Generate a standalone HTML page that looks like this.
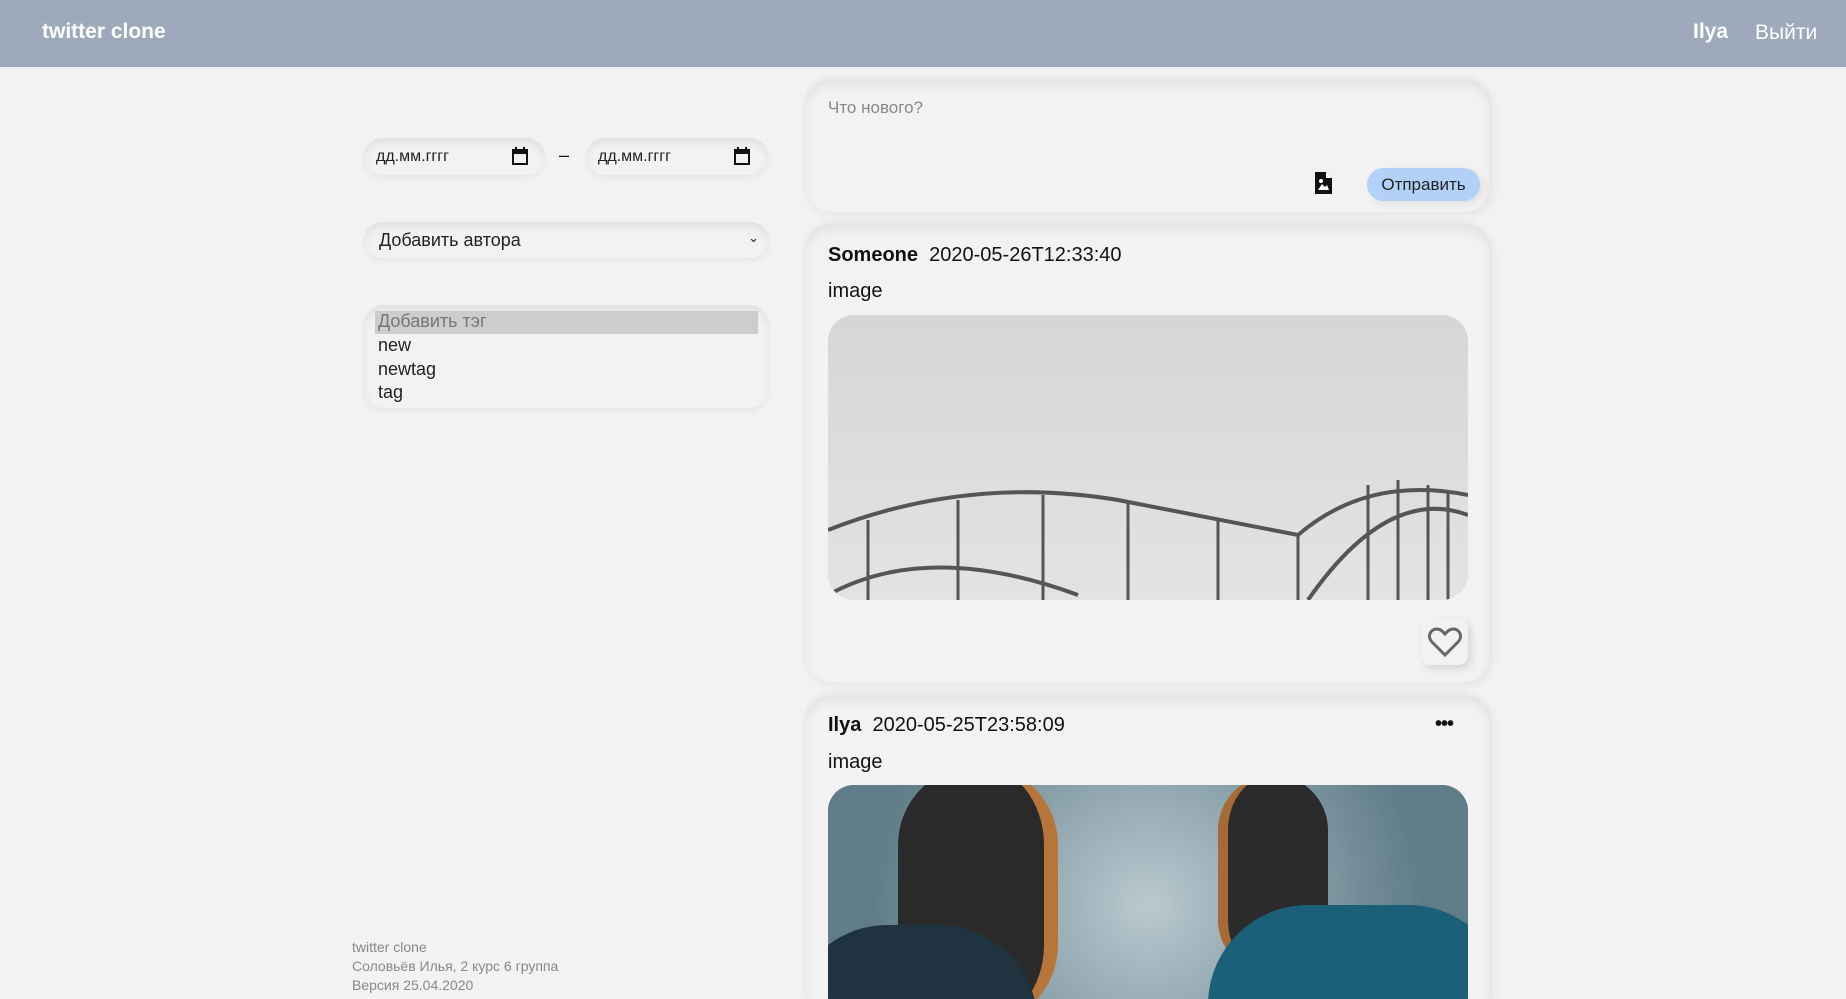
<!DOCTYPE html>
<html style="width:1846px;height:999px;overflow:hidden"><head><meta charset="utf-8"><style>
*{box-sizing:border-box;margin:0;padding:0}
body{width:1846px;height:999px;overflow:hidden;background:#f2f2f2;font-family:"Liberation Sans",sans-serif;position:relative;color:#111}
.hdr{position:absolute;left:0;top:0;width:1846px;height:67px;background:#9eaabb;color:#fff}
.abs{position:absolute}
.card{position:absolute;left:805px;width:685px;border-radius:26px;background:#f2f2f2;box-shadow:inset 0 6px 10px rgba(0,0,0,.06),0 -3px 6px rgba(0,0,0,.05),3px 4px 10px rgba(0,0,0,.05)}
.inp{position:absolute;border-radius:20px;background:#f2f2f2;box-shadow:inset 0 5px 8px rgba(0,0,0,.07),0 3px 6px rgba(0,0,0,.05);font-size:16px;color:#222}
</style></head><body>
<div class="hdr">
<div class="abs" style="left:42px;top:20px;font-size:21px;font-weight:bold">twitter clone</div>
<div class="abs" style="left:1693px;top:20px;font-size:21px;font-weight:bold">Ilya</div>
<div class="abs" style="left:1755px;top:21px;font-size:21px">Выйти</div>
</div>

<div class="inp" style="left:364px;top:138px;width:181px;height:37px"><span class="abs" style="left:12px;top:10px">дд.мм.гггг</span>
<svg class="abs" style="left:148px;top:9px" width="16" height="18" viewBox="0 0 16 18"><rect x="1" y="3" width="14" height="14" fill="none" stroke="#111" stroke-width="2"/><rect x="1" y="3" width="14" height="4" fill="#111"/><rect x="3" y="0" width="2" height="4" fill="#111"/><rect x="11" y="0" width="2" height="4" fill="#111"/></svg></div>
<div class="abs" style="left:559px;top:145px;font-size:18px">–</div>
<div class="inp" style="left:586px;top:138px;width:182px;height:37px"><span class="abs" style="left:12px;top:10px">дд.мм.гггг</span>
<svg class="abs" style="left:148px;top:9px" width="16" height="18" viewBox="0 0 16 18"><rect x="1" y="3" width="14" height="14" fill="none" stroke="#111" stroke-width="2"/><rect x="1" y="3" width="14" height="4" fill="#111"/><rect x="3" y="0" width="2" height="4" fill="#111"/><rect x="11" y="0" width="2" height="4" fill="#111"/></svg></div>

<div class="inp" style="left:364px;top:222px;width:405px;height:36px;font-size:18px"><span class="abs" style="left:15px;top:8px">Добавить автора</span><span class="abs" style="right:10px;top:8px;font-size:13px">⌄</span></div>

<div class="inp" style="left:364px;top:305px;width:405px;height:103px;overflow:hidden;font-size:18px">
<div class="abs" style="left:11px;top:6px;width:383px;height:23px;background:#cdcdcd;color:#777;padding-left:3px">Добавить тэг</div>
<div class="abs" style="left:14px;top:29px;line-height:23.5px">new<br>newtag<br>tag<br>xyz</div>
</div>

<div class="abs" style="left:352px;top:938px;font-size:14px;color:#888;line-height:19px">twitter clone<br>Соловьёв Илья, 2 курс 6 группа<br>Версия 25.04.2020</div>

<div class="card" style="top:80px;height:132px">
<div class="abs" style="left:23px;top:18px;font-size:17px;color:#888">Что нового?</div>
<svg class="abs" style="left:510px;top:92px" width="17" height="22" viewBox="0 0 17 22"><path d="M0 0H11L17 6V22H0Z" fill="#111"/><path d="M11 0V6H17" fill="#fff"/><path d="M3 18L7 12L10 15L12 13L14 18Z" fill="#fff"/><circle cx="6" cy="9" r="2" fill="#fff"/></svg>
<div class="abs" style="left:562px;top:88px;width:113px;height:33px;border-radius:17px;background:#b3d1f7;font-size:17px;color:#222;text-align:center;line-height:33px;box-shadow:3px 3px 8px rgba(0,0,0,.08)">Отправить</div>
</div>

<div class="card" style="top:225px;height:457px">
<div class="abs" style="left:23px;top:19px;font-size:20px"><b>Someone</b>&nbsp; 2020-05-26T12:33:40</div>
<div class="abs" style="left:23px;top:55px;font-size:20px">image</div>
<div class="abs" style="left:23px;top:90px;width:640px;height:285px;border-radius:26px;overflow:hidden;background:linear-gradient(#d5d6d5,#e2e3e2)">
<svg width="640" height="285" viewBox="0 0 640 285"><g fill="none" stroke="#555" stroke-width="4"><path d="M0 215Q140 160 290 185Q420 210 470 220Q540 160 640 180"/><path d="M0 280Q100 225 250 280"/><path d="M480 285Q560 170 640 200"/></g><g stroke="#555" stroke-width="3"><path d="M40 205V285M130 185V285M215 180V285M300 188V285M390 205V285M470 220V285M540 170V285M570 165V285M600 170V285M620 175V285"/></g></svg></div>
<div class="abs" style="left:616px;top:393px;width:47px;height:47px;border-radius:10px;background:#f2f2f2;box-shadow:3px 4px 8px rgba(0,0,0,.12)">
<svg class="abs" style="left:7px;top:8px" width="34" height="32" viewBox="0 0 34 32"><path d="M17 29L4 16C-1 11 2 3 9 3C13 3 15 6 17 8C19 6 21 3 25 3C32 3 35 11 30 16Z" fill="none" stroke="#666" stroke-width="3"/></svg></div>
</div>

<div class="card" style="top:696px;height:303px;border-bottom-left-radius:0;border-bottom-right-radius:0">
<div class="abs" style="left:23px;top:18px;font-size:20px"><b>Ilya</b>&nbsp; 2020-05-25T23:58:09</div>
<div class="abs" style="left:630px;top:17px;font-size:20px;font-weight:bold;letter-spacing:-1px">•••</div>
<div class="abs" style="left:23px;top:55px;font-size:20px">image</div>
<div class="abs" style="left:23px;top:89px;width:640px;height:214px;border-radius:26px 26px 0 0;overflow:hidden;background:#5d7a86">
<div class="abs" style="left:0;top:0;width:640px;height:300px;background:radial-gradient(circle at 50% 40%,#b9c9cf,#5f7c88 75%)"></div>
<div class="abs" style="left:70px;top:-20px;width:160px;height:260px;border-radius:80px;background:#2a2a2a;border-right:14px solid #b7753a"></div>
<div class="abs" style="left:390px;top:-10px;width:110px;height:200px;border-radius:55px;background:#2b2b2b;border-left:10px solid #a56a35"></div>
<div class="abs" style="left:380px;top:120px;width:300px;height:200px;border-radius:100px;background:#1b5f78"></div>
<div class="abs" style="left:-40px;top:140px;width:250px;height:200px;border-radius:100px;background:#1f3440"></div>
</div>
</div>
</body></html>
